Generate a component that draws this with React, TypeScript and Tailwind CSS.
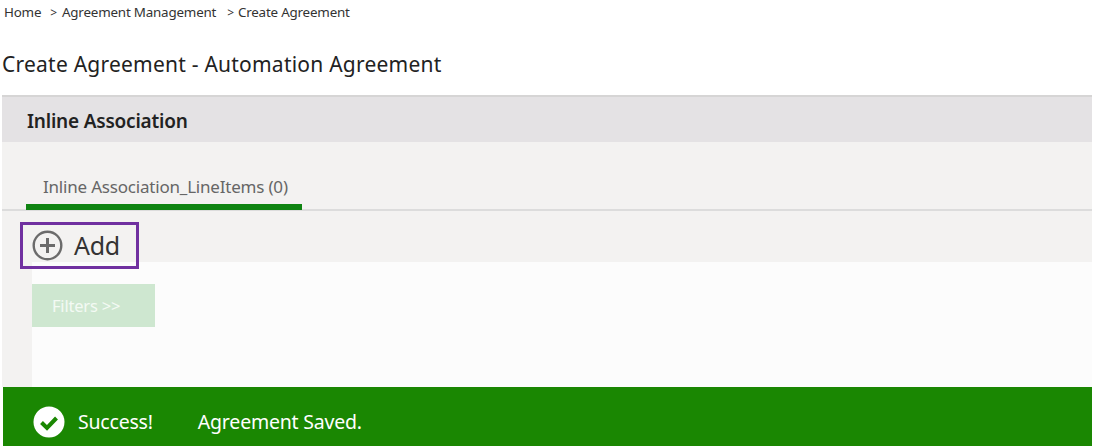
import React from 'react';

function App() {
  return (
    <div className="h-[446px] w-[1094px] overflow-hidden bg-white font-['Noto_Sans',sans-serif] text-[#222]">
      {/* Breadcrumb */}
      <div className="flex h-[25px] items-center pl-[4px] text-[13.4px] tracking-[-0.2px] text-[#333]">
        <span>Home</span>
        <span className="ml-[9px] text-[12px]">&gt;</span>
        <span className="ml-[5px]">Agreement Management</span>
        <span className="ml-[11px] text-[12px]">&gt;</span>
        <span className="ml-[4px]">Create Agreement</span>
      </div>

      <h1 className="mt-[22px] h-[48px] pl-[2px] text-[21px] leading-[34px] tracking-[0.23px] text-[#222]">
        Create Agreement - Automation Agreement
      </h1>

      <div className="ml-[2px] w-[1090px]">
        {/* Section header */}
        <div className="flex h-[47px] items-center border-t-2 border-[#d6d5d5] bg-[#e4e2e4] pl-[25px] pt-[3px] text-[19px] font-semibold tracking-[-0.2px] text-[#222]">
          Inline Association
        </div>

        <div className="relative bg-[#f3f2f1]">
          {/* Tabs */}
          <div className="h-[69px] border-b-2 border-[#dcdcdc] pt-[31px]">
            <div className="ml-[24px] h-[37px] w-[276px] border-b-[6px] border-[#0f8412] pl-[17px] text-[17px] leading-[28px] tracking-[-0.2px] text-[#666]">
              Inline Association_LineItems (0)
            </div>
          </div>

          {/* Add action */}
          <div className="h-[51px]" />
          <div className="absolute left-[18px] top-[80px] flex h-[47px] w-[119px] items-center border-[3px] border-[#7030a0] pl-[9px]">
            <svg width="31" height="31" viewBox="0 0 31 31" fill="none" stroke="#6b6b6b">
              <circle cx="15.5" cy="15.5" r="13.8" strokeWidth="2.4" />
              <path d="M15.5 8v15M8 15.5h15" strokeWidth="3" />
            </svg>
            <span className="ml-[11px] text-[25px] leading-none tracking-[-0.3px] text-[#333]">Add</span>
          </div>

          {/* Content */}
          <div className="ml-[30px] h-[125px] bg-[#fcfcfc] pt-[22px]">
            <div className="flex h-[43px] w-[123px] items-center bg-[#cee7d0] pl-[20px] pt-[1px] text-[16.5px] tracking-[-0.2px] text-[#f4faf4]">
              Filters &gt;&gt;
            </div>
          </div>
        </div>

        {/* Success banner */}
        <div className="ml-[1px] flex h-[59px] items-center bg-[#1a8702] pl-[30px] pt-[10px] text-[19.5px] tracking-[-0.2px] text-white">
          <svg width="32" height="32" viewBox="0 0 32 32">
            <circle cx="16" cy="16" r="15.5" fill="#fff" />
            <path d="M8.5 16.5l5.5 5.5 9.5-10" fill="none" stroke="#1a8702" strokeWidth="4" />
          </svg>
          <span className="ml-[13px]">Success!</span>
          <span className="ml-[45px]">Agreement Saved.</span>
        </div>
      </div>
    </div>
  );
}

export default App;
